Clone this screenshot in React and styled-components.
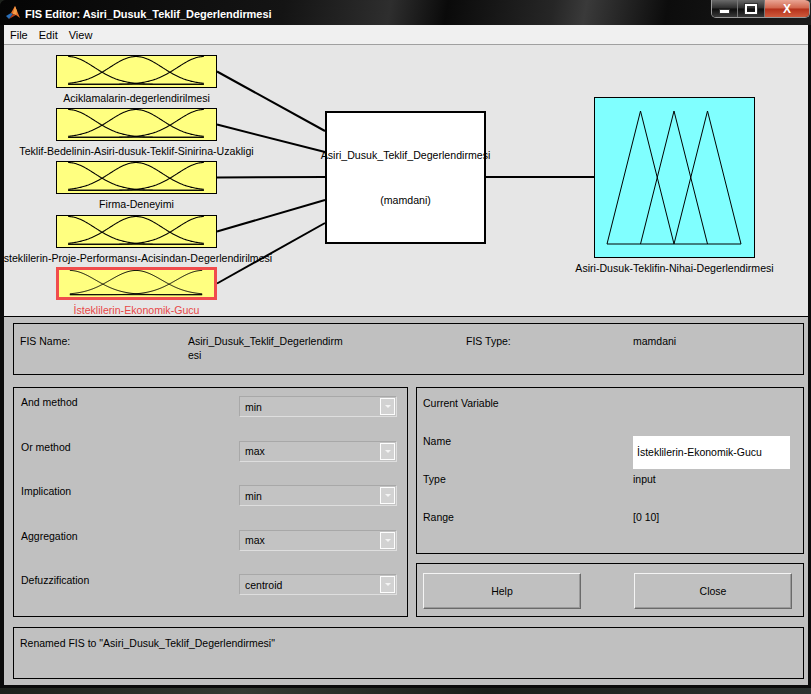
import React from 'react';
import styled, { createGlobalStyle } from 'styled-components';

const GlobalStyle = createGlobalStyle`
  html, body { margin: 0; padding: 0; }
  body {
    background: linear-gradient(90deg, #1d211c, #343a33 30%, #1a1e1a 60%, #2c3230);
    font-family: "Liberation Sans", Arial, sans-serif;
    height: 694px;
    overflow: hidden;
  }
`;

const Window = styled.div`
  width: 811px;
  height: 688px;
  background: #0b0b0b;
  border-radius: 6px 6px 0 0;
  display: flex;
  flex-direction: column;
  overflow: hidden;
`;

const TitleBar = styled.div`
  height: 25px;
  flex: none;
  display: flex;
  align-items: flex-start;
  background: linear-gradient(100deg, #050505 0%, #141414 35%, #2e2e2e 48%, #0a0a0a 55%, #262626 68%, #3a3a3a 72%, #0c0c0c 82%, #1c1c1c 100%);
`;

const TitleIcon = styled.div`
  margin: 6px 0 0 6px;
  flex: none;
`;

const TitleText = styled.div`
  margin: 7px 0 0 5px;
  color: #fff;
  font-weight: bold;
  font-size: 11px;
  letter-spacing: -0.05px;
  line-height: 14px;
`;

const WinButtons = styled.div`
  margin-left: auto;
  margin-right: 1px;
  display: flex;
  height: 17px;
  border: 1px solid #9a9a9a;
  border-top: none;
  border-radius: 0 0 5px 5px;
  overflow: hidden;
`;

const WinButton = styled.div`
  width: ${(p) => p.w}px;
  height: 100%;
  display: flex;
  align-items: center;
  justify-content: center;
  border-left: ${(p) => (p.first ? 'none' : '1px solid #777')};
  background: ${(p) =>
    p.close
      ? 'linear-gradient(#e9a594, #d1654c 48%, #b3301a 52%, #cf5a3c)'
      : 'linear-gradient(#6a6a6a, #2c2c2c 48%, #0c0c0c 52%, #3a3a3a)'};
  color: #fff;
  font-weight: bold;
  font-size: 12px;
`;

const MinGlyph = styled.div`
  width: 9px;
  height: 3px;
  margin-top: 6px;
  background: #fff;
  border: 1px solid #333;
`;

const MaxGlyph = styled.div`
  width: 8px;
  height: 6px;
  border: 2px solid #fff;
  outline: 1px solid #333;
`;

const Content = styled.div`
  flex: 1;
  margin: 0 3px 3px 4px;
  display: flex;
  flex-direction: column;
  background: #c0c0c0;
`;

const MenuBar = styled.div`
  height: 19px;
  flex: none;
  display: flex;
  align-items: center;
  gap: 11px;
  padding-left: 6px;
  background: #f0f0f0;
  border-bottom: 1px solid #a0a0a0;
  font-size: 11px;
  color: #000;
`;

const Diagram = styled.div`
  position: relative;
  height: 271px;
  flex: none;
  background: #e6e6e6;
  border-bottom: 1px solid #000;
  overflow: hidden;
`;

const Wires = styled.svg`
  position: absolute;
  left: 0;
  top: 0;
`;

const Node = styled.div`
  position: absolute;
  left: ${(p) => p.x}px;
  top: ${(p) => p.y}px;
  width: 161px;
  display: flex;
  flex-direction: column;
  align-items: center;
`;

const MfBox = styled.div`
  box-sizing: border-box;
  width: 161px;
  height: ${(p) => p.h}px;
  background: ${(p) => p.bg};
  border: ${(p) => (p.selected ? '3px solid #f04c4c' : '1.5px solid #000')};
  display: flex;
`;

const NodeLabel = styled.div`
  margin-top: 4px;
  white-space: nowrap;
  font-size: 10.6px;
  line-height: 13px;
  color: ${(p) => (p.selected ? '#e84848' : '#000')};
`;

const SystemBox = styled.div`
  position: absolute;
  left: 321px;
  top: 66px;
  box-sizing: border-box;
  width: 161px;
  height: 133px;
  background: #fff;
  border: 2px solid #000;
  display: flex;
  flex-direction: column;
  align-items: center;
  padding-top: 36px;
  gap: 32px;
  font-size: 10.6px;
  line-height: 13px;
  white-space: nowrap;
`;

const Lower = styled.div`
  flex: 1;
  display: flex;
  flex-direction: column;
  padding: 6px 4px 0 9px;
  font-size: 10.5px;
  color: #000;
`;

const Frame = styled.div`
  box-sizing: border-box;
  border: 1px solid #000;
  background: #c0c0c0;
  height: ${(p) => p.h}px;
  flex: none;
`;

const NameFrame = styled(Frame)`
  display: grid;
  grid-template-columns: 168px 278px 167px 1fr;
  padding: 10px 0 0 6px;
  line-height: 14px;
  margin-bottom: 12px;
`;

const Middle = styled.div`
  display: grid;
  grid-template-columns: 395px 1fr;
  gap: 8px;
  height: 230px;
  flex: none;
  margin-bottom: 10px;
`;

const MethodFrame = styled(Frame)`
  display: grid;
  grid-template-columns: 218px 158px;
  grid-auto-rows: 44.5px;
  padding: 8px 0 0 7px;
`;

const RowLabel = styled.div`
  line-height: 13px;
`;

const Select = styled.div`
  box-sizing: border-box;
  height: 21px;
  display: flex;
  align-items: center;
  padding-left: 5px;
  border: 1px solid;
  border-color: #a8a8a8 #dedede #dedede #a8a8a8;
  background: #c3c3c3;
`;

const SelectArrow = styled.div`
  margin-left: auto;
  margin-right: 1px;
  box-sizing: border-box;
  width: 15px;
  height: 17px;
  border: 1px solid #fdfdfd;
  background: #d2d2d2;
  display: flex;
  align-items: center;
  justify-content: center;
  &::after {
    content: '';
    border-left: 3px solid transparent;
    border-right: 3px solid transparent;
    border-top: 3px solid #f4f4f4;
  }
`;

const RightCol = styled.div`
  display: flex;
  flex-direction: column;
  gap: 9px;
`;

const VarFrame = styled(Frame)`
  display: grid;
  grid-template-columns: 210px 157px;
  grid-auto-rows: 38px;
  padding: 8.5px 0 0 6px;
  line-height: 13px;
`;

const NameField = styled.div`
  margin-top: 1.5px;
  height: 33px;
  background: #fff;
  display: flex;
  align-items: center;
  padding-left: 4px;
  white-space: nowrap;
`;

const ButtonFrame = styled(Frame)`
  display: grid;
  grid-template-columns: 158px 158px;
  justify-content: space-between;
  padding: 9px 11px 0 6px;
`;

const PushButton = styled.div`
  box-sizing: border-box;
  height: 36px;
  display: flex;
  align-items: center;
  justify-content: center;
  background: #c0c0c0;
  border: 1px solid;
  border-color: #f4f4f4 #6a6a6a #6a6a6a #f4f4f4;
  box-shadow: inset -1px -1px 0 #9a9a9a;
`;

const StatusFrame = styled(Frame)`
  padding: 8px 0 0 6px;
  line-height: 14px;
`;

const X0 = 11;
const X1 = 145;

const gaussPath = (c, s) => {
  const pts = [];
  for (let x = X0; x <= X1; x += 1) {
    const g = Math.exp(-((x - c) ** 2) / (2 * s * s));
    pts.push(`${x},${(26.5 - 26 * g).toFixed(2)}`);
  }
  return 'M' + pts.join(' L');
};

const GaussCurves = () => (
  <svg width="100%" height="100%" viewBox="0 0 157 29" preserveAspectRatio="none">
    {[X0, (X0 + X1) / 2, X1].map((c) => (
      <path key={c} d={gaussPath(c, 26)} fill="none" stroke="#000" strokeWidth="1" />
    ))}
    <line x1={X0} y1="26.5" x2={X1} y2="26.5" stroke="#000" strokeWidth="1" />
  </svg>
);

const Triangles = () => (
  <svg width="100%" height="100%" viewBox="0 0 159 159">
    <polyline
      points="12,146 45.5,13 79,146 112.5,13 146,146 12,146"
      fill="none"
      stroke="#000"
      strokeWidth="1"
    />
    <polyline points="45.5,146 79,13 112.5,146" fill="none" stroke="#000" strokeWidth="1" />
  </svg>
);

const inputs = [
  { top: 10, to: 86, label: 'Aciklamalarin-degerlendirilmesi' },
  { top: 63, to: 107, label: 'Teklif-Bedelinin-Asiri-dusuk-Teklif-Sinirina-Uzakligi' },
  { top: 116, to: 132, label: 'Firma-Deneyimi' },
  { top: 170, to: 155, label: 'İsteklilerin-Proje-Performansı-Acisindan-Degerlendirilmesi' },
  { top: 222, to: 178, label: 'İsteklilerin-Ekonomik-Gucu', selected: true },
];

const methods = [
  ['And method', 'min'],
  ['Or method', 'max'],
  ['Implication', 'min'],
  ['Aggregation', 'max'],
  ['Defuzzification', 'centroid'],
];

const MatlabLogo = () => (
  <svg width="14" height="14" viewBox="0 0 14 14">
    <polygon points="0,10 5,7 7,8 3,13" fill="#2b6fb8" />
    <polygon points="5,7 9,0 14,12 10,9 7,8" fill="#e8702a" />
    <polygon points="9,0 11,5 10,9 7,8" fill="#f5a04a" />
    <polygon points="3,13 7,8 10,9" fill="#b8401a" />
  </svg>
);

export default function App() {
  return (
    <>
      <GlobalStyle />
      <Window>
        <TitleBar>
          <TitleIcon>
            <MatlabLogo />
          </TitleIcon>
          <TitleText>FIS Editor: Asiri_Dusuk_Teklif_Degerlendirmesi</TitleText>
          <WinButtons>
            <WinButton w={25} first>
              <MinGlyph />
            </WinButton>
            <WinButton w={26}>
              <MaxGlyph />
            </WinButton>
            <WinButton w={44} close>
              X
            </WinButton>
          </WinButtons>
        </TitleBar>
        <Content>
          <MenuBar>
            <span>File</span>
            <span>Edit</span>
            <span>View</span>
          </MenuBar>
          <Diagram>
            <Wires width="804" height="271">
              {inputs.map((n) => (
                <line
                  key={n.top}
                  x1="213"
                  y1={n.top + 16.5}
                  x2="321"
                  y2={n.to}
                  stroke="#000"
                  strokeWidth="2"
                />
              ))}
              <line x1="482" y1="132" x2="590" y2="132" stroke="#000" strokeWidth="2" />
            </Wires>
            {inputs.map((n) => (
              <Node key={n.top} x={52} y={n.top}>
                <MfBox h={33} bg="#ffff80" selected={n.selected}>
                  <GaussCurves />
                </MfBox>
                <NodeLabel selected={n.selected}>{n.label}</NodeLabel>
              </Node>
            ))}
            <SystemBox>
              <div>Asiri_Dusuk_Teklif_Degerlendirmesi</div>
              <div>(mamdani)</div>
            </SystemBox>
            <Node x={590} y={52}>
              <MfBox h={161} bg="#80ffff">
                <Triangles />
              </MfBox>
              <NodeLabel>Asiri-Dusuk-Teklifin-Nihai-Degerlendirmesi</NodeLabel>
            </Node>
          </Diagram>
          <Lower>
            <NameFrame h={52}>
              <div>FIS Name:</div>
              <div>
                Asiri_Dusuk_Teklif_Degerlendirm
                <br />
                esi
              </div>
              <div>FIS Type:</div>
              <div>mamdani</div>
            </NameFrame>
            <Middle>
              <MethodFrame h={230}>
                {methods.map(([label, value]) => (
                  <React.Fragment key={label}>
                    <RowLabel>{label}</RowLabel>
                    <Select>
                      {value}
                      <SelectArrow />
                    </Select>
                  </React.Fragment>
                ))}
              </MethodFrame>
              <RightCol>
                <VarFrame h={167}>
                  <div>Current Variable</div>
                  <div />
                  <div>Name</div>
                  <NameField>İsteklilerin-Ekonomik-Gucu</NameField>
                  <div>Type</div>
                  <div>input</div>
                  <div>Range</div>
                  <div>[0 10]</div>
                </VarFrame>
                <ButtonFrame h={54}>
                  <PushButton>Help</PushButton>
                  <PushButton>Close</PushButton>
                </ButtonFrame>
              </RightCol>
            </Middle>
            <StatusFrame h={52}>Renamed FIS to "Asiri_Dusuk_Teklif_Degerlendirmesi"</StatusFrame>
          </Lower>
        </Content>
      </Window>
    </>
  );
}
